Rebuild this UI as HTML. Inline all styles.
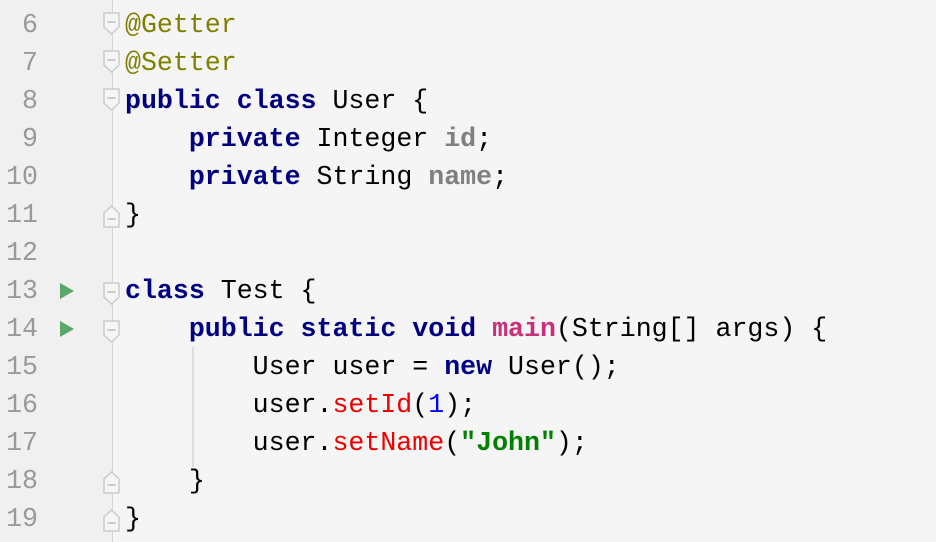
<!DOCTYPE html>
<html><head><style>
body{margin:0;width:936px;height:542px;background:#f5f5f5;overflow:hidden;position:relative;font-family:"Liberation Mono","DejaVu Sans Mono",monospace;font-size:26.6px}
.g{position:absolute;left:0;top:0;width:112px;height:542px;background:#f0f0f0;border-right:1.5px solid #d5d5d5}
.ln{position:absolute;left:0;width:38px;text-align:right;color:#999;line-height:38px}
.c{position:absolute;left:125px;white-space:pre;line-height:38px;color:#000}
.k{color:#000080;font-weight:bold}.a{color:#808000}.f{color:#808080;font-weight:bold}.m{color:#c8307a;font-weight:bold}.r{color:#e00}.n{color:#00f}.s{color:#008000;font-weight:bold}
.run{position:absolute;left:60px;width:0;height:0;border-left:14px solid #59a869;border-top:8px solid transparent;border-bottom:8px solid transparent}
.guide{position:absolute;width:1.5px;background:#ddd}
</style></head><body>
<div class="g"></div>
<div class="guide" style="left:192px;top:347px;height:120px"></div>
<svg style="position:absolute;left:0;top:0" width="936" height="542">
<g fill="#f5f5f5" stroke="#ccc" stroke-width="1.5">
<path d="M104 13h15v14l-7.5 7l-7.5-7z"/><path d="M104 51h15v14l-7.5 7l-7.5-7z"/><path d="M104 89h15v14l-7.5 7l-7.5-7z"/>
<path d="M104 283h15v14l-7.5 7l-7.5-7z"/><path d="M104 321h15v14l-7.5 7l-7.5-7z"/>
<path d="M104 227h15v-14l-7.5-7l-7.5 7z"/><path d="M104 493h15v-14l-7.5-7l-7.5 7z"/><path d="M104 531h15v-14l-7.5-7l-7.5 7z"/>
</g>
<g stroke="#bbb" stroke-width="1.5"><path d="M107.5 22h8M107.5 60h8M107.5 98h8M107.5 292h8M107.5 330h8M107.5 219h8M107.5 485h8M107.5 523h8"/></g>
</svg>
<div class="run" style="top:283px"></div><div class="run" style="top:321px"></div>
<div class="ln" style="top:6px">6<br>7<br>8<br>9<br>10<br>11<br>12<br>13<br>14<br>15<br>16<br>17<br>18<br>19</div>
<div class="c" style="top:6px"><span class="a">@Getter</span>
<span class="a">@Setter</span>
<span class="k">public class</span> User {
    <span class="k">private</span> Integer <span class="f">id</span>;
    <span class="k">private</span> String <span class="f">name</span>;
}

<span class="k">class</span> Test {
    <span class="k">public static void</span> <span class="m">main</span>(String[] args) {
        User user = <span class="k">new</span> User();
        user.<span class="r">setId</span>(<span class="n">1</span>);
        user.<span class="r">setName</span>(<span class="s">"John"</span>);
    }
}</div>
</body></html>
